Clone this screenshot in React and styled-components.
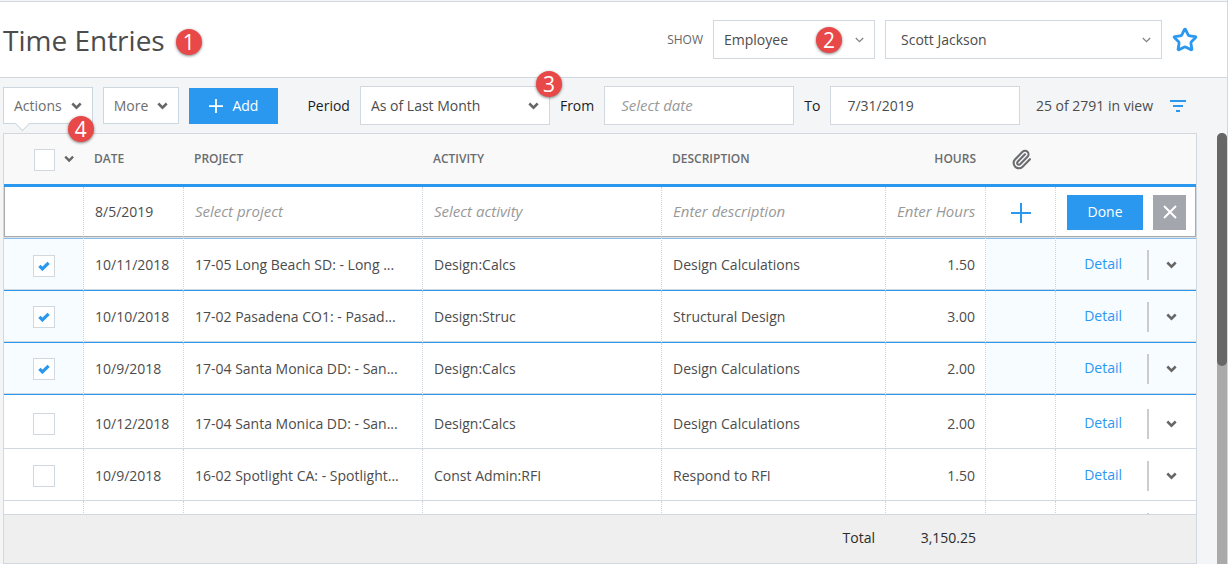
import { useState } from "react";
import styled, { createGlobalStyle, css } from "styled-components";
import { Star, Paperclip } from "lucide-react";

const blue = "#2b98f0";
const line = "#d2d8e0";

const GlobalStyle = createGlobalStyle`
    *, *::before, *::after {
        box-sizing: border-box;
    }
    body {
        margin: 0;
        font-family: "Open Sans", "Noto Sans", sans-serif;
        font-size: 14px;
        line-height: 20px;
        color: #4c4c4c;
        background: #f3f5f7;
    }
    button, input, select {
        font: inherit;
        color: inherit;
    }
    input::placeholder {
        color: #999;
        font-size: 15px;
        font-style: italic;
        opacity: 1;
    }
`

const Page = styled.div`
    height: 100vh;
    display: flex;
    flex-direction: column;
    border-right: 1px solid ${line};
    padding-top: 1px;
    background: #f3f5f7;
`

const Header = styled.header`
    display: flex;
    align-items: center;
    height: 77px;
    padding: 0 29px 0 3px;
    background: white;
    border-top: 1px solid ${line};
    border-bottom: 1px solid ${line};
`

const Title = styled.h1`
    position: relative;
    margin: 0;
    font-size: 28px;
    line-height: 40px;
    font-weight: 400;
`

const Filters = styled.div`
    display: flex;
    align-items: center;
    gap: 10px;
    margin-left: auto;
`

const Caption = styled.label`
    font-size: 12px;
    color: #666;
`

const Badge = styled.span`
    position: absolute;
    top: ${props => props.$top}px;
    right: ${props => props.$right}px;
    z-index: 2;
    width: 26px;
    height: 26px;
    border-radius: 50%;
    background: #e94848;
    color: white;
    font-size: 21px;
    line-height: 26px;
    text-align: center;
    box-shadow: 0 1px 3px rgba(0, 0, 0, 0.5);
    pointer-events: none;
`

const SelectBox = styled.div`
    position: relative;
    display: grid;
    align-items: center;
    width: ${props => props.$width}px;
    height: 39px;
    background: white;
    border: 1px solid ${line};
    color: #4c4c4c;

    select {
        grid-area: 1 / 1;
        width: 100%;
        height: 37px;
        padding: 0 ${props => props.$pad || 10}px;
        border: none;
        background: transparent;
        appearance: none;
    }
    > svg {
        grid-area: 1 / 1;
        justify-self: end;
        margin-right: 10px;
        pointer-events: none;
    }
`

const IconButton = styled.button`
    display: inline-flex;
    padding: 0;
    border: none;
    background: none;
    color: ${props => props.$color || "#666"};
    vertical-align: middle;
    cursor: pointer;
`

const Toolbar = styled.div`
    display: flex;
    align-items: center;
    gap: 10px;
    height: 55px;
    padding: 0 41px 0 3px;
`

const MenuButton = styled.button`
    position: relative;
    display: flex;
    align-items: center;
    gap: 9px;
    height: 37px;
    padding: 0 10px;
    background: white;
    border: 1px solid #ccd8e0;
    color: #6e6e6e;
    cursor: pointer;
`

const Notch = styled.span`
    position: absolute;
    left: 13px;
    bottom: -6px;
    width: 11px;
    height: 11px;
    background: white;
    border-right: 1px solid #ccd8e0;
    border-bottom: 1px solid #ccd8e0;
    transform: rotate(45deg);
`

const PrimaryButton = styled.button`
    display: flex;
    align-items: center;
    justify-content: center;
    gap: 9px;
    width: ${props => props.$width}px;
    height: ${props => props.$height}px;
    padding: 0;
    border: none;
    background: ${blue};
    color: white;
    font-weight: 500;
    cursor: pointer;
`

const Period = styled.div`
    display: flex;
    align-items: center;
    gap: 10px;
    margin-left: 19px;
    color: #1c1c1c;
`

const DateInput = styled.input`
    width: 190px;
    height: 39px;
    padding: 0 16px;
    border: 1px solid ${line};
    background: white;
    color: #4c4c4c;
`

const Count = styled.span`
    margin: 0 7px 0 auto;
    white-space: nowrap;
`

const Body = styled.div`
    flex: 1;
    min-height: 0;
    display: flex;
    gap: 20px;
    padding-left: 3px;
`

const Panel = styled.main`
    flex: 1;
    min-width: 0;
    display: flex;
    flex-direction: column;
    background: white;
    border: 1px solid ${line};
`

const Scroller = styled.div`
    flex: 1;
    min-height: 0;
    overflow: hidden;
`

const ScrollTrack = styled.div`
    width: 10px;
    background: #aaa;
    border-radius: 5px 5px 0 0;
`

const ScrollThumb = styled.div`
    height: 54%;
    border-radius: 5px;
    background: #666;
`

const Table = styled.table`
    width: 100%;
    table-layout: fixed;
    border-spacing: 0;
`

const HeadCell = styled.th`
    height: 53px;
    padding: 0 10px;
    background: #f9f9f9;
    border-bottom: 3px solid ${blue};
    color: #6a6c6f;
    font-size: 12px;
    font-weight: 600;
    text-align: ${props => props.$align || "left"};

    > svg {
        display: block;
        margin: 0 auto;
    }
`

const Cell = styled.td`
    padding: 0 10px 0 11px;
    border-right: 1px dotted #ccd4dc;
    text-align: ${props => props.$align || "left"};
    white-space: nowrap;
    overflow: hidden;

    &:last-child {
        border-right: none;
    }
`

const CheckCell = styled(Cell)`
    padding-left: 29px;
`

const EditRow = styled.tr`
    ${Cell} {
        height: 50px;
        padding-top: 1px;
        border-bottom: 1px solid #aaa;
    }
    ${Cell}:first-child {
        border-left: 1px solid #aaa;
    }
    ${Cell}:last-child {
        padding-right: 9px;
        border-right: 1px solid #aaa;
    }
`

const Row = styled.tr`
    ${Cell} {
        height: 52px;
        padding-top: 2px;
        border-bottom: 1px solid ${line};
    }

    ${props => props.$selected && css`
        ${Cell} {
            padding-top: 0;
            border-bottom-color: ${blue};
            box-shadow: inset 0 -1px 0 ${line};
        }
        ${Cell}:first-child, ${Cell}:nth-last-child(-n + 2) {
            background: #f6fcff;
        }
    `}

    ${props => props.$first && css`
        ${Cell} {
            height: 54px;
            padding-top: 2px;
            border-top: 1px solid #dde2e6;
            box-shadow: inset 0 1px 0 #86bdec, inset 0 -1px 0 ${line};
        }
    `}

    ${props => props.$afterSelected && css`
        ${Cell} {
            height: 54px;
            padding-top: 4px;
        }
    `}
`

const Check = styled.input`
    display: block;
    width: 22px;
    height: 22px;
    margin: 1px 0 0;
    appearance: none;
    border: 1px solid ${line};
    background: white;

    &:checked {
        background: white url("data:image/svg+xml,%3Csvg xmlns='http://www.w3.org/2000/svg' viewBox='0 0 12 10'%3E%3Cpath d='M1.4 4.8l3 3.1L10.6 1.8' fill='none' stroke='%232b98f0' stroke-width='3.2'/%3E%3C/svg%3E") center / 12px 10px no-repeat;
    }
`

const CheckAll = styled.div`
    display: flex;
    align-items: center;
    gap: 9px;
    padding-left: 20px;
`

const EditInput = styled.input`
    display: block;
    width: 100%;
    padding: 0;
    border: none;
    background: transparent;
    text-align: ${props => props.$align || "left"};
`

const CellActions = styled.div`
    display: flex;
    align-items: center;
    justify-content: flex-end;
    gap: 10px;
`

const CloseButton = styled(IconButton)`
    align-items: center;
    justify-content: center;
    width: 33px;
    height: 35px;
    background: #a3a7ad;
`

const DetailLink = styled.a`
    margin-right: 15px;
    padding-bottom: 2px;
    color: ${blue};
    text-decoration: none;
`

const RowMenu = styled(IconButton)`
    align-items: center;
    height: 30px;
    padding: 0 9px 0 17px;
    border-left: 2px solid #ccc;
`

const Footer = styled.footer`
    display: flex;
    align-items: center;
    justify-content: flex-end;
    height: 49px;
    padding: 0 220px 2px 0;
    background: #efefef;
    border-top: 1px solid ${line};
    color: #2c2c2c;
    font-weight: 500;
`

const TotalValue = styled.span`
    width: 101px;
    text-align: right;
`

const Chevron = () => (
    <svg width="11" height="8" viewBox="0 0 11 8" fill="none" stroke="#666" strokeWidth="2.5">
        <path d="M1.3 1.5l4.2 4.2 4.2-4.2" />
    </svg>
)

const ThinChevron = () => (
    <svg width="9" height="6" viewBox="0 0 9 6" fill="none" stroke="#808488" strokeWidth="1.3">
        <path d="M.8 1l3.7 3.7L8.2 1" />
    </svg>
)

const Plus = ({ size, width }) => (
    <svg width={size} height={size} viewBox="0 0 20 20" fill="none" stroke="currentColor" strokeWidth={width}>
        <path d="M10 0v20M0 10h20" />
    </svg>
)

const Cross = () => (
    <svg width="14" height="14" viewBox="0 0 14 14" fill="none" stroke="white" strokeWidth="2">
        <path d="M1 1l12 12M13 1L1 13" />
    </svg>
)

const FilterIcon = () => (
    <svg width="16" height="12" viewBox="0 0 16 12" fill="currentColor">
        <path d="M0 0h16v2H0zM3 5h10v2H3zM6 10h4v2H6z" />
    </svg>
)

const entries = [
    { id: 1, date: "10/11/2018", project: "17-05 Long Beach SD: - Long ...", activity: "Design:Calcs", description: "Design Calculations", hours: "1.50" },
    { id: 2, date: "10/10/2018", project: "17-02 Pasadena CO1: - Pasad...", activity: "Design:Struc", description: "Structural Design", hours: "3.00" },
    { id: 3, date: "10/9/2018", project: "17-04 Santa Monica DD: - San...", activity: "Design:Calcs", description: "Design Calculations", hours: "2.00" },
    { id: 4, date: "10/12/2018", project: "17-04 Santa Monica DD: - San...", activity: "Design:Calcs", description: "Design Calculations", hours: "2.00" },
    { id: 5, date: "10/9/2018", project: "16-02 Spotlight CA: - Spotlight...", activity: "Const Admin:RFI", description: "Respond to RFI", hours: "1.50" },
    { id: 6 },
]

export default function App() {
    const [selected, setSelected] = useState([1, 2, 3]);

    const toggle = (id) => {
        setSelected(selected.includes(id) ? selected.filter(s => s !== id) : [...selected, id])
    }

    return (
        <Page>
            <GlobalStyle />

            <Header>
                <Title>
                    Time Entries
                    <Badge $top={9} $right={-37}>1</Badge>
                </Title>

                <Filters>
                    <Caption htmlFor="show">SHOW</Caption>
                    <SelectBox $width={162}>
                        <select id="show">
                            <option>Employee</option>
                        </select>
                        <ThinChevron />
                        <Badge $top={6} $right={32}>2</Badge>
                    </SelectBox>
                    <SelectBox $width={277} $pad={15}>
                        <select aria-label="Employee name">
                            <option>Scott Jackson</option>
                        </select>
                        <ThinChevron />
                    </SelectBox>
                    <IconButton $color={blue} aria-label="Favorite">
                        <Star size={26} strokeWidth={2.6} />
                    </IconButton>
                </Filters>
            </Header>

            <Toolbar>
                <MenuButton>
                    Actions <Chevron />
                    <Notch />
                    <Badge $top={28} $right={-2}>4</Badge>
                </MenuButton>
                <MenuButton>More <Chevron /></MenuButton>
                <PrimaryButton $width={89} $height={36}>
                    <Plus size={14} width={2.5} /> Add
                </PrimaryButton>

                <Period>
                    <label htmlFor="period">Period</label>
                    <SelectBox $width={190}>
                        <select id="period">
                            <option>As of Last Month</option>
                        </select>
                        <Chevron />
                        <Badge $top={-16} $right={-13}>3</Badge>
                    </SelectBox>
                    <label htmlFor="from">From</label>
                    <DateInput id="from" placeholder="Select date" />
                    <label htmlFor="to">To</label>
                    <DateInput id="to" defaultValue="7/31/2019" />
                </Period>

                <Count>25 of 2791 in view</Count>
                <IconButton $color={blue} aria-label="Filter"><FilterIcon /></IconButton>
            </Toolbar>

            <Body>
                <Panel>
                    <Scroller>
                        <Table>
                            <colgroup>
                                <col width="80" />
                                <col width="100" />
                                <col width="239" />
                                <col width="239" />
                                <col />
                                <col width="100" />
                                <col width="70" />
                                <col width="140" />
                            </colgroup>
                            <thead>
                                <tr>
                                    <HeadCell>
                                        <CheckAll>
                                            <Check type="checkbox" aria-label="Select all" />
                                            <Chevron />
                                        </CheckAll>
                                    </HeadCell>
                                    <HeadCell>DATE</HeadCell>
                                    <HeadCell>PROJECT</HeadCell>
                                    <HeadCell>ACTIVITY</HeadCell>
                                    <HeadCell>DESCRIPTION</HeadCell>
                                    <HeadCell $align="right">HOURS</HeadCell>
                                    <HeadCell><Paperclip size={21} strokeWidth={2.4} /></HeadCell>
                                    <HeadCell />
                                </tr>
                            </thead>
                            <tbody>
                                <EditRow>
                                    <Cell />
                                    <Cell><EditInput aria-label="Date" defaultValue="8/5/2019" /></Cell>
                                    <Cell><EditInput aria-label="Project" placeholder="Select project" /></Cell>
                                    <Cell><EditInput aria-label="Activity" placeholder="Select activity" /></Cell>
                                    <Cell><EditInput aria-label="Description" placeholder="Enter description" /></Cell>
                                    <Cell><EditInput aria-label="Hours" placeholder="Enter Hours" $align="right" /></Cell>
                                    <Cell $align="center">
                                        <IconButton $color={blue} aria-label="Attach file"><Plus size={20} width={2} /></IconButton>
                                    </Cell>
                                    <Cell>
                                        <CellActions>
                                            <PrimaryButton $width={76} $height={35}>Done</PrimaryButton>
                                            <CloseButton aria-label="Cancel"><Cross /></CloseButton>
                                        </CellActions>
                                    </Cell>
                                </EditRow>

                                {entries.map((entry, i) => (
                                    <Row
                                        key={entry.id}
                                        $selected={selected.includes(entry.id)}
                                        $first={i === 0}
                                        $afterSelected={i > 0 && selected.includes(entries[i - 1].id) && !selected.includes(entry.id)}
                                    >
                                        <CheckCell>
                                            <Check
                                                type="checkbox"
                                                aria-label="Select entry"
                                                checked={selected.includes(entry.id)}
                                                onChange={() => toggle(entry.id)}
                                            />
                                        </CheckCell>
                                        <Cell>{entry.date}</Cell>
                                        <Cell>{entry.project}</Cell>
                                        <Cell>{entry.activity}</Cell>
                                        <Cell>{entry.description}</Cell>
                                        <Cell $align="right">{entry.hours}</Cell>
                                        <Cell />
                                        <Cell>
                                            <CellActions>
                                                {entry.date && <DetailLink href="#detail">Detail</DetailLink>}
                                                <RowMenu aria-label="More options"><Chevron /></RowMenu>
                                            </CellActions>
                                        </Cell>
                                    </Row>
                                ))}
                            </tbody>
                        </Table>
                    </Scroller>

                    <Footer>
                        Total
                        <TotalValue>3,150.25</TotalValue>
                    </Footer>
                </Panel>

                <ScrollTrack>
                    <ScrollThumb />
                </ScrollTrack>
            </Body>
        </Page>
    )
}
